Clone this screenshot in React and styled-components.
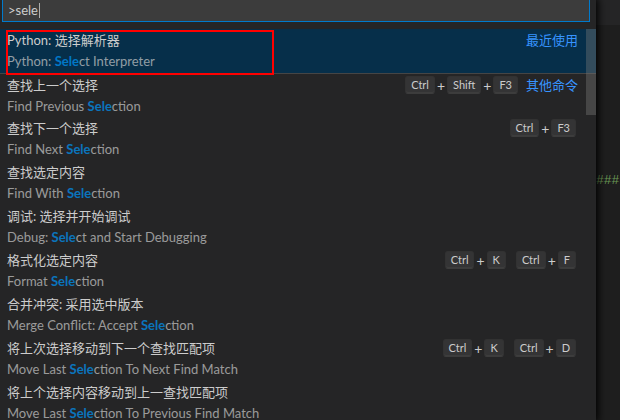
import styled, { createGlobalStyle } from "styled-components";

const GlobalStyle = createGlobalStyle`
    body {
        margin: 0;
        background: #1e1e1e;
        overflow: hidden;
    }
`;

const commands = [
    { label: "Python: 选择解析器", detail: "Python: Select Interpreter", group: "最近使用", selected: true },
    { label: "查找上一个选择", detail: "Find Previous Selection", keys: [["Ctrl", "Shift", "F3"]], group: "其他命令", divider: true },
    { label: "查找下一个选择", detail: "Find Next Selection", keys: [["Ctrl", "F3"]] },
    { label: "查找选定内容", detail: "Find With Selection" },
    { label: "调试: 选择并开始调试", detail: "Debug: Select and Start Debugging" },
    { label: "格式化选定内容", detail: "Format Selection", keys: [["Ctrl", "K"], ["Ctrl", "F"]] },
    { label: "合并冲突: 采用选中版本", detail: "Merge Conflict: Accept Selection" },
    { label: "将上次选择移动到下一个查找匹配项", detail: "Move Last Selection To Next Find Match", keys: [["Ctrl", "K"], ["Ctrl", "D"]] },
    { label: "将上个选择内容移动到上一查找匹配项", detail: "Move Last Selection To Previous Find Match" },
];

const query = "Sele";

// split the detail around the first match of the typed text
const Highlighted = ({ text }) => {
    const at = text.indexOf(query);
    if (at < 0) return text;
    return (
        <>
            {text.slice(0, at)}
            <Match>{text.slice(at, at + query.length)}</Match>
            {text.slice(at + query.length)}
        </>
    );
};

const App = () => {
    return (
        <Page>
            <GlobalStyle />
            <Widget>
                <InputBox>
                    <InputText>&gt;sele</InputText>
                    <Caret />
                </InputBox>
                <List>
                    {commands.map((cmd) => (
                        <Row key={cmd.detail} $selected={cmd.selected} $divider={cmd.divider}>
                            <LabelLine>
                                <Label>{cmd.label}</Label>
                                {cmd.keys && (
                                    <Keybinding>
                                        {cmd.keys.map((chord, i) => (
                                            <Chord key={i}>
                                                {chord.map((k, j) => (
                                                    <span key={k}>
                                                        {j > 0 && <Plus>+</Plus>}
                                                        <Key>{k}</Key>
                                                    </span>
                                                ))}
                                            </Chord>
                                        ))}
                                    </Keybinding>
                                )}
                                {cmd.group && <GroupLabel>{cmd.group}</GroupLabel>}
                            </LabelLine>
                            <Detail>
                                <Highlighted text={cmd.detail} />
                            </Detail>
                        </Row>
                    ))}
                    <ScrollThumb />
                    <Annotation />
                </List>
            </Widget>
            <Editor>
                <EditorTabs />
                <EditorBody>
                    <CodeLine>###</CodeLine>
                </EditorBody>
            </Editor>
        </Page>
    );
};

const Page = styled.div`
    display: flex;
    width: 620px;
    height: 420px;
    overflow: hidden;
    font-family: "Lato", "Noto Sans CJK SC", sans-serif;
`;

const Widget = styled.div`
    width: 596px;
    flex-shrink: 0;
    height: 100%;
    background: #252526;
    box-shadow: 0 0 8px 2px #000;
    z-index: 1;
    display: flex;
    flex-direction: column;
`;

const InputBox = styled.div`
    display: flex;
    align-items: center;
    margin: 0 6px 7px 2px;
    height: 21px;
    padding: 0 0 0 5px;
    background: #3c3c3c;
    border: 1px solid #007acc;
    border-top: none;
    box-sizing: content-box;
`;

const InputText = styled.span`
    color: #cccccc;
    font-size: 13px;
    line-height: 21px;
`;

const Caret = styled.span`
    width: 1px;
    height: 15px;
    background: #aeafad;
    margin-left: 1px;
`;

const List = styled.div`
    position: relative;
    flex: 1;
    overflow: hidden;
`;

const Row = styled.div`
    box-sizing: border-box;
    height: 44px;
    padding: 0 18px 2px 7px;
    display: flex;
    flex-direction: column;
    background: ${(p) => (p.$selected ? "#062f4a" : "transparent")};
    border-top: ${(p) => (p.$divider ? "1px solid #454545" : "none")};
`;

const LabelLine = styled.div`
    display: flex;
    align-items: center;
    height: 22px;
`;

const Label = styled.div`
    flex: 1;
    color: #cccccc;
    font-size: 13px;
    line-height: 22px;
    white-space: nowrap;
`;

const Detail = styled.div`
    color: #cccccc;
    opacity: 0.7;
    font-size: 13px;
    line-height: 20px;
    white-space: nowrap;
`;

const Match = styled.span`
    color: #0097fb;
    font-weight: bold;
`;

const Keybinding = styled.div`
    display: flex;
    align-items: center;
`;

const Chord = styled.div`
    display: flex;
    align-items: center;
    & + & {
        margin-left: 6px;
    }
    span {
        display: flex;
        align-items: center;
    }
`;

const Key = styled.span`
    box-sizing: border-box;
    height: 18px;
    margin: 0 2px;
    padding: 0 5px;
    border-radius: 3px;
    background: rgba(128, 128, 128, 0.17);
    border: 1px solid rgba(51, 51, 51, 0.6);
    border-bottom-color: rgba(68, 68, 68, 0.6);
    box-shadow: inset 0 -1px 0 rgba(68, 68, 68, 0.6);
    color: #cccccc;
    font-size: 11px;
    line-height: 16px;
`;

const Plus = styled.span`
    color: #cccccc;
    font-size: 14px;
`;

const GroupLabel = styled.div`
    margin-left: 6px;
    color: #3794ff;
    font-size: 13px;
    line-height: 22px;
`;

const ScrollThumb = styled.div`
    position: absolute;
    top: 0;
    right: 0;
    width: 10px;
    height: 86px;
    background: rgba(121, 121, 121, 0.4);
`;

const Annotation = styled.div`
    position: absolute;
    top: 1px;
    left: 6px;
    width: 268px;
    height: 45px;
    box-sizing: border-box;
    border: 2px solid #ff0000;
`;

const Editor = styled.div`
    flex: 1;
    display: flex;
    flex-direction: column;
`;

const EditorTabs = styled.div`
    height: 25px;
    background: #252526;
`;

const EditorBody = styled.div`
    flex: 1;
    background: #1e1e1e;
    padding-top: 146px;
`;

const CodeLine = styled.div`
    color: #6a9955;
    font-family: "Liberation Mono", monospace;
    font-size: 13px;
    line-height: 19px;
    white-space: nowrap;
`;

export default App;
